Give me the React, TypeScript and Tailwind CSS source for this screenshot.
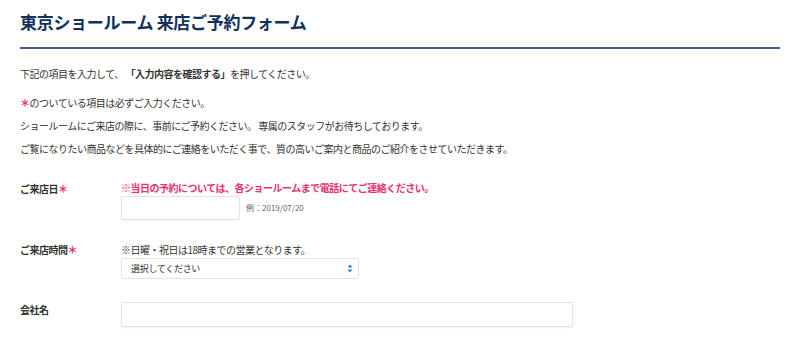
import React from "react";

const jp = { fontFamily: '"Noto Sans CJK JP", "Noto Sans", sans-serif' };

function Star() {
  return <span className="text-[#ec2f74] font-black">＊</span>;
}

export default function App() {
  return (
    <div className="w-[800px] h-[338px] bg-white overflow-hidden px-5 text-[#333]" style={jp}>
      <h1 className="pt-[10px] text-[17px] leading-[24px] font-bold text-[#13305c] tracking-[-0.3px]">
        東京ショールーム 来店ご予約フォーム
      </h1>
      <div className="mt-[13px] h-[2px] bg-[#3a5f8e]" />
      <div className="text-[10px] tracking-[-0.5px]">
        <p className="mt-[13px] leading-[23px]">
          下記の項目を入力して、 <span className="font-bold">「入力内容を確認する」</span>を押してください。
        </p>
        <p className="mt-[6px] leading-[23px]">
          <Star />のついている項目は必ずご入力ください。
        </p>
        <p className="leading-[23px]">
          ショールームにご来店の際に、事前にご予約ください。 専属のスタッフがお待ちしております。
        </p>
        <p className="leading-[23px]">
          ご覧になりたい商品などを具体的にご連絡をいただく事で、質の高いご案内と商品のご紹介をさせていただきます。
        </p>

        <div className="mt-[20px] flex items-start">
          <div className="w-[101px] shrink-0 font-bold leading-[16px] mt-[1px]">
            ご来店日<Star />
          </div>
          <div>
            <p className="leading-[16px] font-bold text-[#ec2f74]">
              ※当日の予約については、各ショールームまで電話にてご連絡ください。
            </p>
            <div className="flex items-center">
              <div className="w-[119px] h-[24px] border border-[#e3e3e3] rounded-[2px] bg-white shadow-[0_1px_2px_rgba(0,0,0,0.06)]" />
              <span className="ml-[6px] text-[8px] text-[#666] tracking-[0px]">例：2019/07/20</span>
            </div>
          </div>
        </div>

        <div className="mt-[22px] flex items-start">
          <div className="w-[101px] shrink-0 font-bold leading-[16px]">
            ご来店時間<Star />
          </div>
          <div>
            <p className="leading-[16px]">※日曜・祝日は18時までの営業となります。</p>
            <div className="w-[238px] h-[21px] border border-[#e3e3e3] rounded-[2px] bg-white flex items-center justify-between pl-[9px] pr-[5px]">
              <span className="text-[9px] tracking-[-0.3px]">選択してください</span>
              <svg width="6" height="9" viewBox="0 0 6 9">
                <path d="M3 0.5 L5.5 3.5 H0.5 Z" fill="#2e7fd0" />
                <path d="M3 8.5 L5.5 5.5 H0.5 Z" fill="#2e7fd0" />
              </svg>
            </div>
          </div>
        </div>

        <div className="mt-[23px] flex items-start">
          <div className="w-[101px] shrink-0 font-bold leading-[16px]">会社名</div>
          <div className="w-[452px] h-[25px] border border-[#e3e3e3] rounded-[2px] bg-white shadow-[0_1px_2px_rgba(0,0,0,0.06)]" />
        </div>
      </div>
    </div>
  );
}
